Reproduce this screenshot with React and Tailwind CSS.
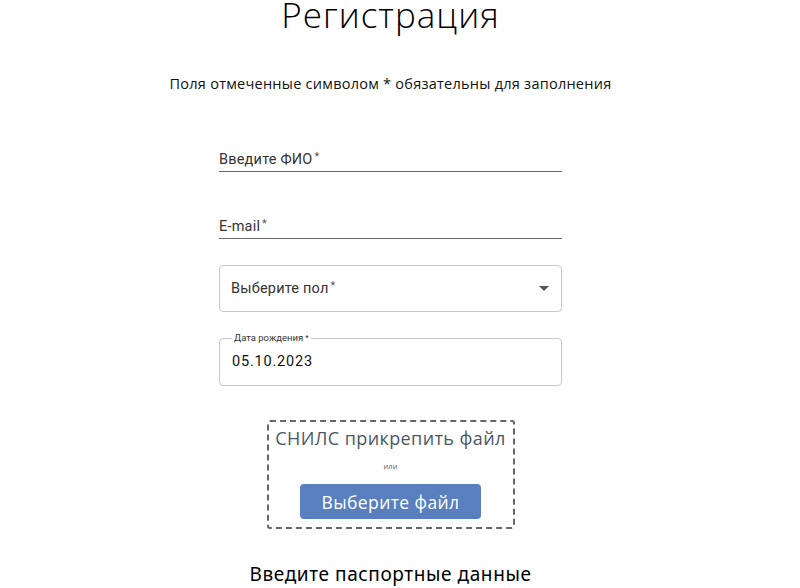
export default function App() {
  const mont = { fontFamily: '"Open Sans", "Noto Sans", sans-serif' };
  return (
    <div className="w-[781px] h-[588px] overflow-hidden bg-white flex flex-col items-center" style={mont}>
      <h1 className="mt-0 text-[35px] leading-[30px] font-light text-black tracking-[1px]">Регистрация</h1>
      <p className="mt-[45px] text-[14.5px] leading-[18px] text-[#111] tracking-[0.25px]">Поля отмеченные символом * обязательны для заполнения</p>

      <div className="mt-[51px] w-[343px] flex flex-col" style={{ fontFamily: 'Roboto, "Liberation Sans", sans-serif' }}>
        <div className="h-[28px] flex items-end border-b border-[#666]">
          <span className="text-[14.5px] text-[#333] tracking-[0.2px]">Введите ФИО<span className="ml-[2px] text-[11px] align-top text-[#555]">*</span></span>
        </div>
        <div className="mt-[39px] h-[28px] flex items-end border-b border-[#666]">
          <span className="text-[14.5px] text-[#333] tracking-[0.2px]">E-mail<span className="ml-[2px] text-[11px] align-top text-[#555]">*</span></span>
        </div>
        <div className="mt-[26px] h-[47px] rounded-[4px] border border-[#c8c8c8] flex items-center justify-between pl-[11px] pr-[12px]">
          <span className="text-[14.5px] text-[#333] tracking-[0.2px]">Выберите пол<span className="ml-[2px] text-[11px] align-top text-[#555]">*</span></span>
          <svg width="10" height="5" viewBox="0 0 10 5"><path d="M0 0 L10 0 L5 5 Z" fill="#555" /></svg>
        </div>
        <fieldset className="mt-[21px] h-[53px] rounded-[4px] border border-[#c8c8c8] pl-[12px] pr-[10px]">
          <legend className="px-[2px] text-[9.5px] leading-[10px] text-[#333]">Дата рождения<span className="ml-[2px] align-top text-[8px]">*</span></legend>
          <div className="mt-[8px] text-[14.5px] text-[#111] tracking-[0.8px]">05.10.2023</div>
        </fieldset>
      </div>

      <div className="mt-[34px] w-[248px] h-[109px] border-2 border-dashed border-[#666] rounded-[3px] flex flex-col items-center">
        <div className="mt-[5px] text-[18px] leading-[22px] text-[#4a5766] tracking-[0.4px]">СНИЛС прикрепить файл</div>
        <div className="mt-[12px] text-[7.5px] leading-[10px] text-[#666]">или</div>
        <button className="mt-[13px] w-[181px] h-[35px] rounded-[4px] bg-[#5a7fbe] text-white text-[17.5px] leading-[20px] tracking-[0.4px]">Выберите файл</button>
      </div>

      <div className="mt-[33px] text-[19px] leading-[24px] text-black tracking-[0.6px]" style={{ fontFamily: '"Noto Sans", sans-serif' }}>Введите паспортные данные</div>
    </div>
  );
}
